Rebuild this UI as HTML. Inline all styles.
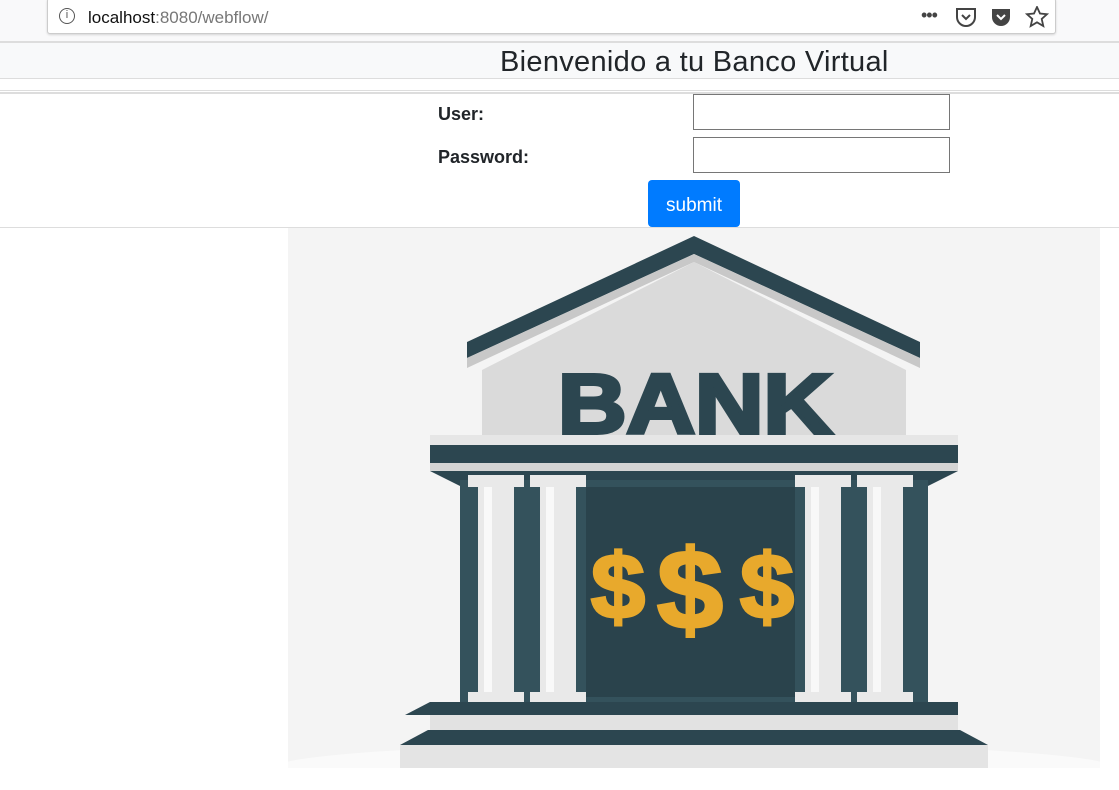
<!DOCTYPE html>
<html><head><meta charset="utf-8"><style>
*{margin:0;padding:0;box-sizing:border-box}
body{width:1119px;height:790px;background:#fff;font-family:"Liberation Sans",sans-serif;position:relative;overflow:hidden;color:#212529}
.a{position:absolute}
</style></head><body>
<div class="a" style="left:0;top:0;width:1119px;height:41px;background:#f9f9fa"></div>
<div class="a" style="left:47px;top:-2px;width:1009px;height:36px;background:#fff;border:1px solid #ccc;border-radius:3px;box-shadow:0 1px 2px rgba(0,0,0,.15)"></div>
<div class="a" style="left:59px;top:8px;width:16px;height:16px;border:1.5px solid #555;border-radius:50%;font-size:11px;text-align:center;line-height:13px;color:#555">i</div>
<div class="a" style="left:88px;top:8px;font-size:17px;color:#111">localhost<span style="color:#777">:8080/webflow/</span></div>
<div class="a" style="left:921px;top:5px;font-size:18px;color:#444;letter-spacing:-1px">•••</div>
<svg class="a" style="left:955px;top:6px" width="100" height="22">
<path d="M2 3h18v8a9 9 0 0 1-18 0z" fill="none" stroke="#444" stroke-width="2"/><path d="M7 9l4 4 4-4" fill="none" stroke="#444" stroke-width="2"/>
<path d="M37 3h18v8a9 9 0 0 1-18 0z" fill="#444"/><path d="M42 9l4 4 4-4" fill="none" stroke="#fff" stroke-width="2"/>
<path d="M82 1l3 6.5 7 .7-5.3 4.8 1.6 7-6.3-3.7-6.3 3.7 1.6-7-5.3-4.8 7-.7z" fill="none" stroke="#444" stroke-width="1.8"/>
</svg>
<div class="a" style="left:0;top:41px;width:1119px;height:2px;background:#ddd"></div>
<div class="a" style="left:0;top:43px;width:1119px;height:36px;background:#f8f9fa;border-bottom:1px solid #ddd"></div>
<div class="a" style="left:500px;top:46px;width:388px;font-size:29px;color:#212529;white-space:nowrap;letter-spacing:0.3px">Bienvenido a tu Banco Virtual</div>
<div class="a" style="left:0;top:90px;width:1119px;height:4px;border-top:1px solid #ddd;border-bottom:2px solid #ddd"></div>
<div class="a" style="left:438px;top:104px;font-size:18px;font-weight:bold">User:</div>
<div class="a" style="left:438px;top:147px;font-size:18px;font-weight:bold">Password:</div>
<div class="a" style="left:693px;top:94px;width:257px;height:36px;border:1px solid #767676"></div>
<div class="a" style="left:693px;top:137px;width:257px;height:36px;border:1px solid #767676"></div>
<div class="a" style="left:648px;top:180px;width:92px;height:47px;background:#007bff;border-radius:4px;color:#fff;font-size:19px;text-align:center;line-height:51px">submit</div>
<div class="a" style="left:0;top:227px;width:1119px;height:1px;background:#ddd"></div>
<svg class="a" style="left:288px;top:228px" width="812" height="540" viewBox="288 228 812 540">
<rect x="288" y="228" width="812" height="540" fill="#f4f4f4"/>
<ellipse cx="694" cy="768" rx="420" ry="25" fill="#fafafa"/>
<polygon points="482,370 694,262 906,370 906,435 482,435" fill="#dadada"/>
<polygon points="467,342 694,236 920,342 920,358 694,254 467,358" fill="#2c4650"/>
<polygon points="467,358 694,254 920,358 920,368 694,262 467,368" fill="#c8c8c8"/>
<text x="695" y="433" text-anchor="middle" style="font-family:'Liberation Sans';font-weight:bold" font-size="84" fill="#2c4650" stroke="#2c4650" stroke-width="4" textLength="274" lengthAdjust="spacingAndGlyphs">BANK</text>
<rect x="430" y="435" width="528" height="10" fill="#e6e6e6"/>
<rect x="430" y="445" width="528" height="18" fill="#2c4650"/>
<rect x="430" y="463" width="528" height="8" fill="#d4d4d4"/>
<polygon points="430,471 958,471 928,486 460,486" fill="#2c4650"/>
<rect x="460" y="480" width="468" height="222" fill="#34525c"/>
<rect x="586" y="487" width="209" height="210" fill="#2a434c"/>
<g fill="#e9e9e9">
<rect x="468" y="475" width="56" height="12"/><rect x="478" y="487" width="36" height="205"/><rect x="468" y="692" width="56" height="13"/>
<rect x="530" y="475" width="56" height="12"/><rect x="540" y="487" width="36" height="205"/><rect x="530" y="692" width="56" height="13"/>
<rect x="795" y="475" width="56" height="12"/><rect x="805" y="487" width="36" height="205"/><rect x="795" y="692" width="56" height="13"/>
<rect x="857" y="475" width="56" height="12"/><rect x="867" y="487" width="36" height="205"/><rect x="857" y="692" width="56" height="13"/>
</g>
<g fill="#fff" opacity=".7"><rect x="484" y="487" width="8" height="205"/><rect x="546" y="487" width="8" height="205"/><rect x="811" y="487" width="8" height="205"/><rect x="873" y="487" width="8" height="205"/></g>
<g style="font-family:'Liberation Sans';font-weight:bold" fill="#e8a92c" stroke="#e8a92c" stroke-width="3" text-anchor="middle">
<text x="618" y="618" font-size="92" textLength="54" lengthAdjust="spacingAndGlyphs">$</text>
<text x="690" y="628" font-size="112" textLength="66" lengthAdjust="spacingAndGlyphs">$</text>
<text x="767" y="618" font-size="92" textLength="54" lengthAdjust="spacingAndGlyphs">$</text>
</g>
<polygon points="430,702 958,702 958,715 405,715" fill="#2c4650"/>
<rect x="430" y="715" width="528" height="20" fill="#e2e2e2"/>
<polygon points="428,730 960,730 988,745 400,745" fill="#2c4650"/>
<rect x="400" y="745" width="588" height="23" fill="#e4e4e4"/>
</svg>
</body></html>
